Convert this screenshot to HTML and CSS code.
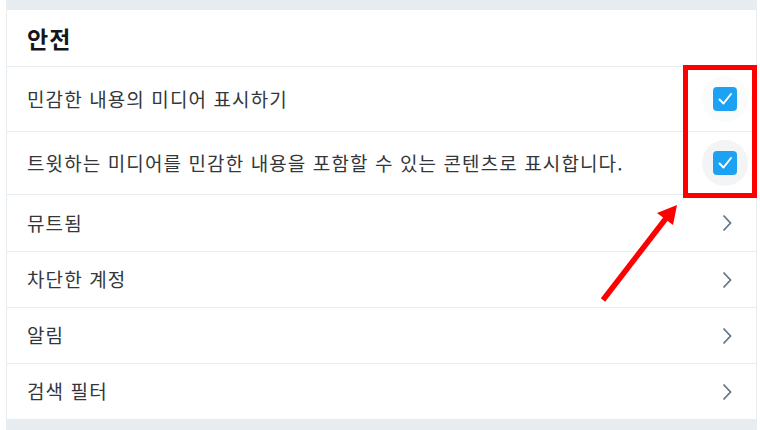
FILE: index.html
```html
<!DOCTYPE html>
<html lang="ko">
<head>
<meta charset="utf-8">
<link rel="stylesheet" href="styles.css">
</head>
<body>
<div class="frame">
  <div class="band"></div>
  <section class="panel">
    <h2 class="title">안전</h2>
    <div class="row row-tall">
      <span class="label">민감한 내용의 미디어 표시하기</span>
      <span class="check-wrap faint">
        <span class="check"><svg viewBox="0 0 24 24" width="24" height="24"><polyline points="6.5,12.5 10.5,16.5 18,7" fill="none" stroke="#fff" stroke-width="2" stroke-linecap="round" stroke-linejoin="round"/></svg></span>
      </span>
    </div>
    <div class="row row-mid">
      <span class="label">트윗하는 미디어를 민감한 내용을 포함할 수 있는 콘텐츠로 표시합니다.</span>
      <span class="check-wrap hover">
        <span class="check"><svg viewBox="0 0 24 24" width="24" height="24"><polyline points="6.5,12.5 10.5,16.5 18,7" fill="none" stroke="#fff" stroke-width="2" stroke-linecap="round" stroke-linejoin="round"/></svg></span>
      </span>
    </div>
    <div class="row nav nav-first">
      <span class="label">뮤트됨</span>
      <svg class="chev" viewBox="0 0 10 18" width="10" height="18"><polyline points="1.5,1.5 8.5,9 1.5,16.5" fill="none" stroke="#657786" stroke-width="1.8"/></svg>
    </div>
    <div class="row nav">
      <span class="label">차단한 계정</span>
      <svg class="chev" viewBox="0 0 10 18" width="10" height="18"><polyline points="1.5,1.5 8.5,9 1.5,16.5" fill="none" stroke="#657786" stroke-width="1.8"/></svg>
    </div>
    <div class="row nav">
      <span class="label">알림</span>
      <svg class="chev" viewBox="0 0 10 18" width="10" height="18"><polyline points="1.5,1.5 8.5,9 1.5,16.5" fill="none" stroke="#657786" stroke-width="1.8"/></svg>
    </div>
    <div class="row nav last">
      <span class="label">검색 필터</span>
      <svg class="chev" viewBox="0 0 10 18" width="10" height="18"><polyline points="1.5,1.5 8.5,9 1.5,16.5" fill="none" stroke="#657786" stroke-width="1.8"/></svg>
    </div>
  </section>
  <div class="band band-bottom"></div>
</div>
<div class="highlight"></div>
<svg class="arrow" viewBox="0 0 760 430" width="760" height="430">
  <line x1="603" y1="300" x2="667" y2="217" stroke="#ff0000" stroke-width="5.5"/>
  <polygon points="677,205 657,213 673,225" fill="#ff0000"/>
</svg>
</body>
</html>
```
FILE: styles.css
```css
html, body {
  margin: 0;
  padding: 0;
  background: #ffffff;
}
body {
  width: 760px;
  height: 430px;
  overflow: hidden;
  position: relative;
  font-family: "Noto Sans CJK KR", "Noto Sans", sans-serif;
  color: #14171a;
}
.frame {
  margin-left: 6px;
  width: 749px;
  border-left: 1px solid #e6ecf0;
  border-right: 1px solid #e6ecf0;
  display: flex;
  flex-direction: column;
}
.band {
  height: 10px;
  background: #e6ecf0;
}
.band-bottom {
  height: 11px;
}
.panel {
  background: #fff;
  display: flex;
  flex-direction: column;
}
.title {
  margin: 0;
  height: 56px;
  box-sizing: content-box;
  border-bottom: 1px solid #e6ecf0;
  padding: 0 20px;
  display: flex;
  align-items: center;
  font-size: 23px;
  font-weight: 700;
  letter-spacing: 1px;
  color: #14171a;
}
.row {
  display: flex;
  align-items: center;
  justify-content: space-between;
  padding: 0 8px 0 20px;
  border-bottom: 1px solid #e6ecf0;
  font-size: 19px;
  color: #33373b;
}
.row-tall { height: 64px; }
.row-mid { height: 62px; }
.nav { height: 55px; padding-right: 24px; }
.nav-first { height: 56px; }
.nav.last { border-bottom: none; }
.label {
  white-space: nowrap;
  letter-spacing: 1.1px;
  line-height: 1;
  margin-top: -2px;
}
.check-wrap {
  width: 46px;
  height: 46px;
  border-radius: 50%;
  display: flex;
  align-items: center;
  justify-content: center;
}
.faint { background: #fafbfb; }
.hover { background: #f2f4f6; }
.check {
  width: 24px;
  height: 24px;
  border-radius: 4px;
  background: #1da1f2;
  display: flex;
}
.chev { display: block; }
.highlight {
  position: absolute;
  left: 683px;
  top: 65px;
  width: 64px;
  height: 123px;
  border: 5px solid #ff0000;
}
.arrow {
  position: absolute;
  left: 0;
  top: 0;
  pointer-events: none;
}
```
